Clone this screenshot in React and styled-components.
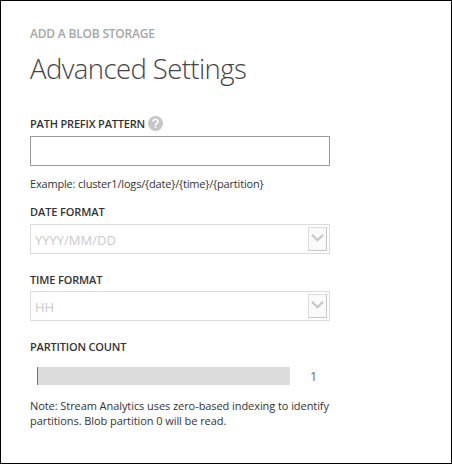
import React from "react";
import styled, { createGlobalStyle } from "styled-components";

const GlobalStyle = createGlobalStyle`
  *, *::before, *::after { box-sizing: border-box; }
  body { margin: 0; background: #fff; }
`;

const Dialog = styled.main`
  width: 452px;
  height: 464px;
  padding: 24px 0 0 29px;
  border: 1px solid #000;
  background: #fff;
  color: #333;
  font-family: "Open Sans", "Noto Sans", sans-serif;
  overflow: hidden;
`;

const Eyebrow = styled.div`
  height: 18px;
  line-height: 18px;
  font-size: 12px;
  font-weight: 600;
  letter-spacing: -0.2px;
  color: #a6a6a6;
  white-space: nowrap;
`;

const Title = styled.h1`
  margin: 5px 0 0;
  height: 42px;
  line-height: 42px;
  font-size: 27.5px;
  font-weight: 300;
  letter-spacing: -0.58px;
  color: #444;
  white-space: nowrap;
`;

const Form = styled.div`
  display: flex;
  flex-direction: column;
  width: 300px;
  margin-top: 26px;
`;

const Field = styled.section`
  display: flex;
  flex-direction: column;
  height: ${(p) => p.$height}px;
`;

const LabelRow = styled.div`
  display: flex;
  align-items: center;
  gap: 3px;
  height: 16px;
  margin-bottom: ${(p) => p.$gap}px;
`;

const Label = styled.label`
  line-height: 16px;
  font-size: 11px;
  font-weight: 600;
  letter-spacing: ${(p) => p.$tracking || 0}px;
  white-space: nowrap;
`;

const HelpIcon = styled.svg`
  width: 15px;
  height: 15px;
  flex: none;
  margin-top: -2px;
`;

const TextInput = styled.input`
  width: 300px;
  height: 30px;
  padding: 0 5px;
  border: 1px solid #999;
  border-radius: 0;
  background: #fff;
  outline: none;
`;

const Hint = styled.div`
  margin-top: ${(p) => p.$top}px;
  line-height: 15px;
  font-size: 11px;
  letter-spacing: ${(p) => p.$tracking || 0}px;
  white-space: nowrap;
`;

const Select = styled.div`
  display: flex;
  align-items: center;
  justify-content: space-between;
  width: 300px;
  height: 30px;
  padding: 0 2px 0 4px;
  border: 1px solid #dcdcdc;
`;

const Placeholder = styled.span`
  padding-top: 2px;
  font-size: 13px;
  line-height: 20px;
  color: #cacaca;
`;

const DropButton = styled.span`
  display: flex;
  justify-content: center;
  width: 19px;
  height: 24px;
  border: 1px solid #dcdcdc;
  border-right-color: #c6c6c6;
  border-bottom-color: #c6c6c6;
  background: #fafafa;
`;

const Chevron = styled.svg`
  width: 17px;
  height: 22px;
`;

const SliderRow = styled.div`
  display: flex;
  align-items: center;
  height: 18px;
  padding-left: 7px;
`;

const Track = styled.div`
  width: 253px;
  height: 18px;
  border-left: 1px solid #707070;
  background: #dcdcdc;
`;

const Count = styled.span`
  margin-left: 20px;
  padding-top: 2px;
  font-size: 12.5px;
  line-height: 18px;
  color: #666;
`;

function Dropdown({ text }) {
  return (
    <Select>
      <Placeholder>{text}</Placeholder>
      <DropButton>
        <Chevron viewBox="0 0 17 22" fill="none">
          <path d="M3 6.8 L8.5 12.2 L14 6.8" stroke="#c8c8c8" strokeWidth="2.3" />
        </Chevron>
      </DropButton>
    </Select>
  );
}

export default function App() {
  return (
    <>
      <GlobalStyle />
      <Dialog>
        <Eyebrow>ADD A BLOB STORAGE</Eyebrow>
        <Title>Advanced Settings</Title>
        <Form>
          <Field $height={88}>
            <LabelRow $gap={4}>
              <Label htmlFor="prefix" $tracking={-0.18}>PATH PREFIX PATTERN</Label>
              <HelpIcon viewBox="0 0 14 14" fill="none">
                <circle cx="7" cy="7" r="7" fill="#c6c6c6" />
                <path d="M4.7 5.2 C4.8 2.5 9.4 2.5 9.3 5.1 C9.3 6.7 7.1 6.8 7.1 8.6" stroke="#fff" strokeWidth="1.6" />
                <circle cx="7.1" cy="10.5" r="1" fill="#fff" />
              </HelpIcon>
            </LabelRow>
            <TextInput id="prefix" />
            <Hint $top={10} $tracking={-0.18}>Example: cluster1/logs/&#123;date&#125;/&#123;time&#125;/&#123;partition&#125;</Hint>
          </Field>
          <Field $height={68}>
            <LabelRow $gap={4}><Label $tracking={-0.1}>DATE FORMAT</Label></LabelRow>
            <Dropdown text="YYYY/MM/DD" />
          </Field>
          <Field $height={67}>
            <LabelRow $gap={3}><Label $tracking={-0.15}>TIME FORMAT</Label></LabelRow>
            <Dropdown text="HH" />
          </Field>
          <Field $height={100}>
            <LabelRow $gap={12}><Label $tracking={-0.18}>PARTITION COUNT</Label></LabelRow>
            <SliderRow>
              <Track />
              <Count>1</Count>
            </SliderRow>
            <Hint $top={13} $tracking={-0.07}>
              Note: Stream Analytics uses zero-based indexing to identify
              <br />
              partitions. Blob partition 0 will be read.
            </Hint>
          </Field>
        </Form>
      </Dialog>
    </>
  );
}
